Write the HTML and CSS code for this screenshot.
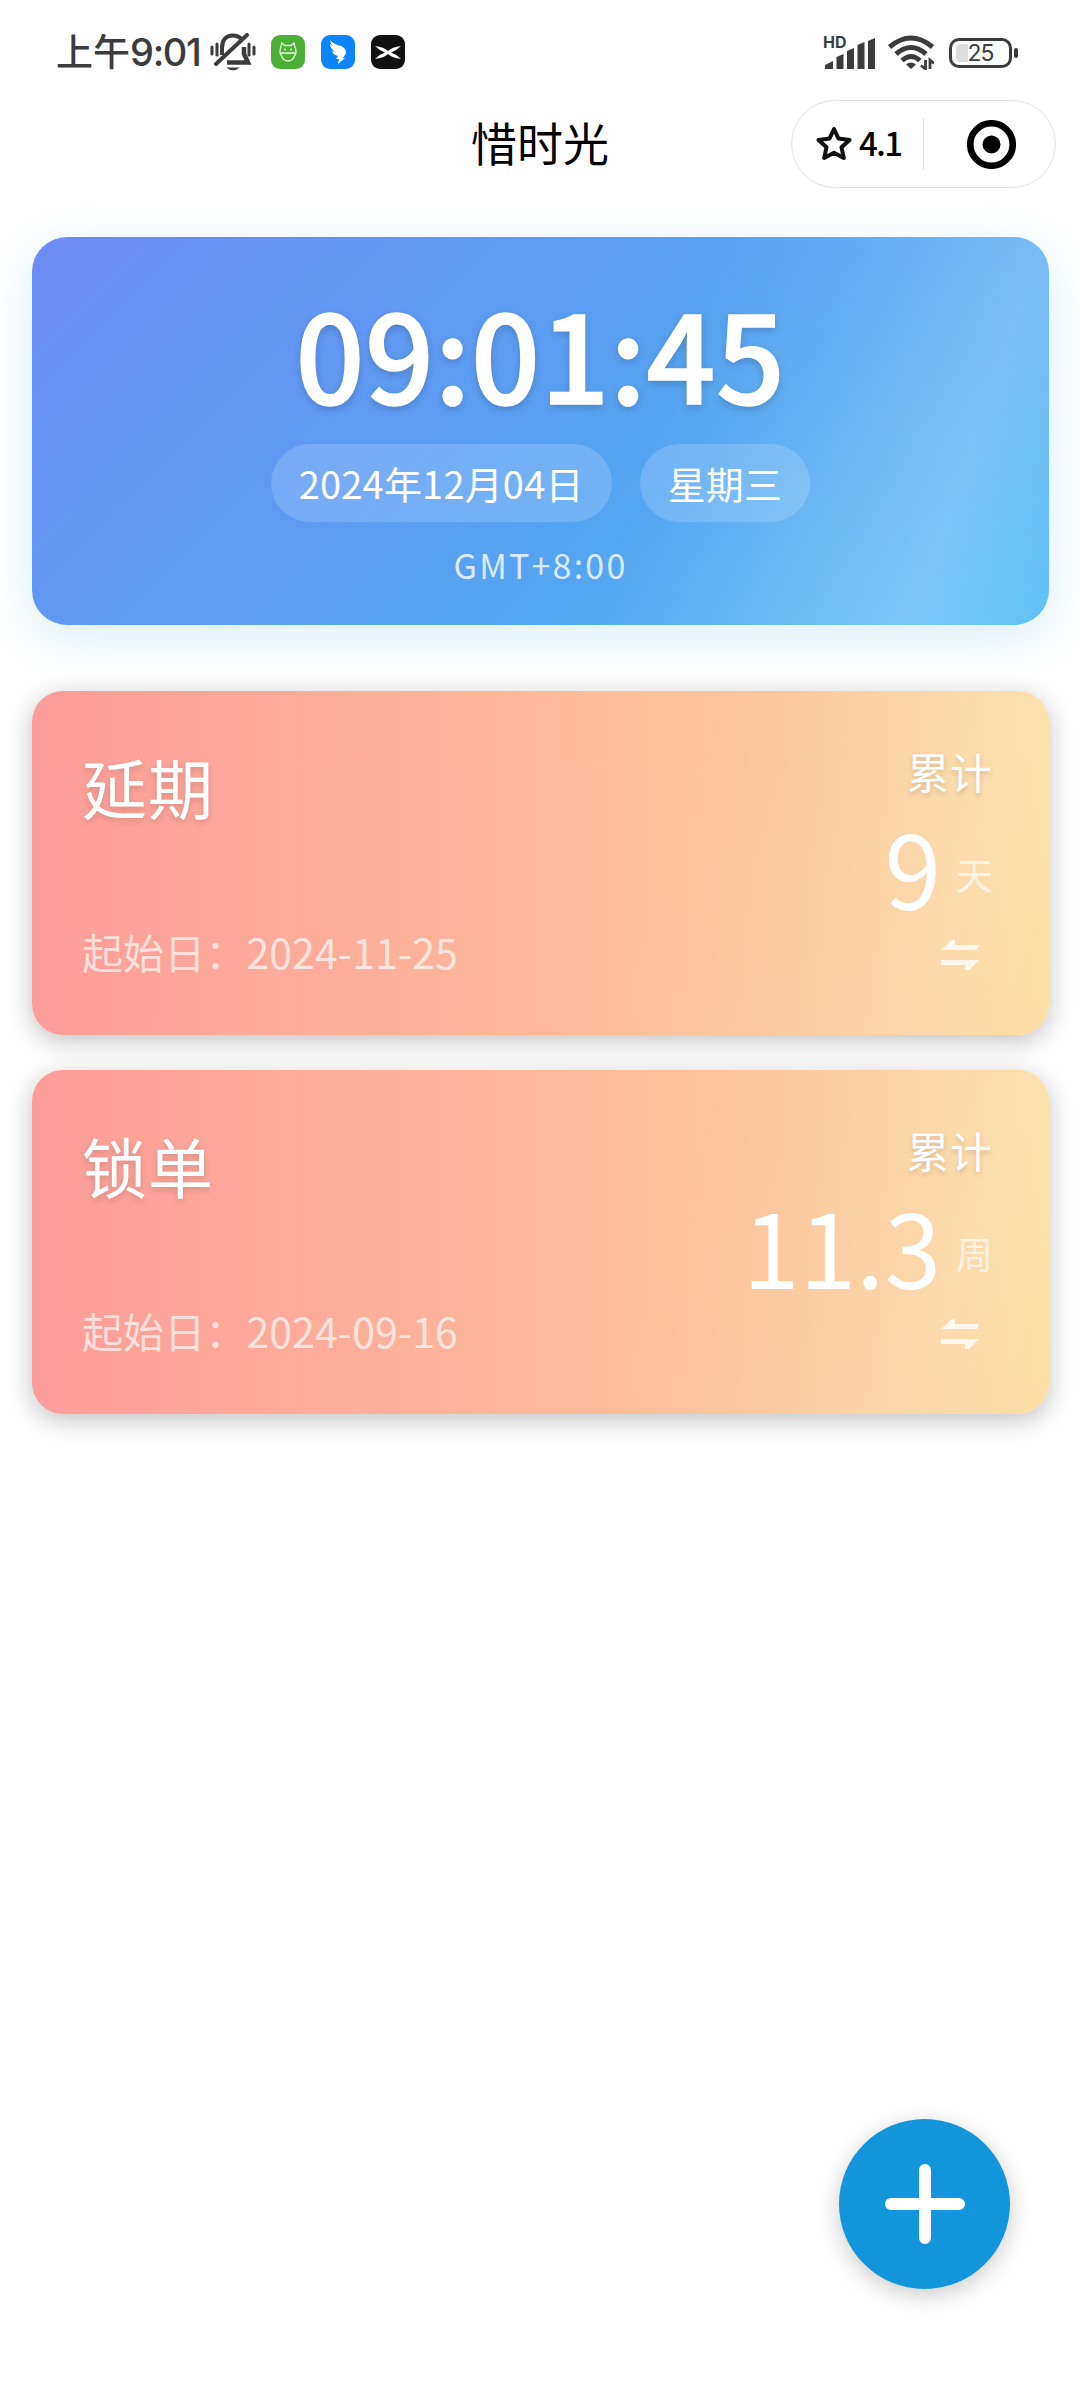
FILE: index.html
```html
<!DOCTYPE html>
<html lang="zh-CN">
<head>
    <meta charset="UTF-8">
    <meta name="viewport" content="width=device-width, initial-scale=1.0">
    <title>惜时光</title>
    <link rel="stylesheet" href="styles.css">
</head>
<body>
    <div class="status-bar">
        <div class="status-left">
            <span class="status-time">上午<b>9:01</b></span>
            <svg class="bell" viewBox="0 0 46 38" fill="none" stroke="#3c3c3e" stroke-width="4">
                <path d="M12 22V15C12 7 16 2.500 22.500 2.500C27 2.500 30 4 32 7"/>
                <path d="M34 14V21L38 29.500H17" stroke-width="4.500"/>
                <path d="M6 31L37 2" stroke-linecap="round"/>
                <path d="M2 14V21M7 11V22M39 11V22M44 14V21" stroke-width="3" stroke-linecap="round"/>
                <path d="M16 34.500H30Q23 40 16 34.500Z" fill="#3c3c3e" stroke="none"/>
            </svg>
            <svg class="app" viewBox="0 0 34 34">
                <rect width="34" height="34" rx="9" fill="#4cb036"/>
                <path d="M10 12L10.500 8L14 10.500H20L23 8L24 12Q26 17 24 20Q22 26 17 26Q12 26 10 20Q8 17 10 12ZM9.500 18H24.500" fill="none" stroke="#e3f6dc" stroke-width="1.300"/>
                <circle cx="14" cy="14.500" r="1" fill="#e3f6dc"/>
                <circle cx="20" cy="14.500" r="1" fill="#e3f6dc"/>
            </svg>
            <svg class="app" viewBox="0 0 34 34">
                <rect width="34" height="34" rx="9" fill="#0b85f8"/>
                <path d="M9 5Q12 9 20 11Q25 13 25 18L22 23H24L17 29L18 24H15L17 21Q12 20 11 16L14 17Q9 13 9 9L12 11Q9 8 9 5Z" fill="#fff"/>
            </svg>
            <svg class="app" viewBox="0 0 34 34">
                <rect width="34" height="34" rx="9" fill="#111"/>
                <path d="M4 11Q13 12 17 16Q21 12 30 11Q25 16 20 17.500Q25 19 30 24Q21 23 17 19Q13 23 4 24Q9 19 14 17.500Q9 16 4 11Z" fill="#fff"/>
            </svg>
        </div>
        <div class="status-right">
            <div class="signal">
                <span class="hd">HD</span>
                <svg viewBox="0 0 50 32" fill="#3c3c3e">
                    <path d="M0 32V28L8 24V32ZM11.500 32V20L18.500 17V32ZM22 32V14L29 11V32ZM32.500 32V8L39.500 5V32ZM43 32V4L50 1V32Z"/>
                </svg>
            </div>
            <svg class="wifi" viewBox="0 0 46 35" fill="none" stroke="#3c3c3e" stroke-width="5">
                <path d="M1.500 12Q23 -6 44.500 12"/>
                <path d="M8 19Q23 6 38 19"/>
                <path d="M14 25.500Q23 17.500 32 25.500"/>
                <path d="M18 29.500Q23 25.500 28 29.500L23 34Z" fill="#3c3c3e" stroke="none"/>
                <path d="M37.500 25V34L33 30.500M42 34V25L46 28.500" stroke-width="2.800"/>
            </svg>
            <div class="battery"><span class="battery-level"></span><span class="battery-text">25</span></div>
        </div>
    </div>

    <div class="nav-bar">
        <h1>惜时光</h1>
        <div class="capsule">
            <div class="rating">
                <svg viewBox="0 0 36 36" fill="none" stroke="#111" stroke-width="4" stroke-linejoin="round">
                    <path d="M18 3L22.400 12.400L33.500 14L25.500 21.300L27.800 32L18 26.800L8.200 32L10.500 21.300L2.500 14L13.600 12.400Z"/>
                </svg>
                <span>4.1</span>
            </div>
            <div class="close">
                <svg viewBox="0 0 48 48">
                    <circle cx="24" cy="24" r="20.800" fill="none" stroke="#000" stroke-width="6.500"/>
                    <circle cx="24" cy="24" r="8.800"/>
                </svg>
            </div>
        </div>
    </div>

    <div class="container">
        <div class="clock-card">
            <div class="clock-time">09:01:45</div>
            <div class="clock-date">
                <span>2024年12月04日</span>
                <span>星期三</span>
            </div>
            <div class="clock-zone">GMT+8:00</div>
        </div>

        <div class="day-card">
            <div class="day-info">
                <h2>延期</h2>
                <p>起始日：2024-11-25</p>
            </div>
            <div class="day-count">
                <div class="count-label">累计</div>
                <div class="count-value">9<span>天</span></div>
                <svg class="swap" viewBox="0 0 38 30"><path d="M0 10L11 0H14V5H38L36 10ZM38 20L28 30H24V25H0V20Z" fill="#fff"/></svg>
            </div>
        </div>

        <div class="day-card">
            <div class="day-info">
                <h2>锁单</h2>
                <p>起始日：2024-09-16</p>
            </div>
            <div class="day-count">
                <div class="count-label">累计</div>
                <div class="count-value">11.3<span>周</span></div>
                <svg class="swap" viewBox="0 0 38 30"><path d="M0 10L11 0H14V5H38L36 10ZM38 20L28 30H24V25H0V20Z" fill="#fff"/></svg>
            </div>
        </div>
    </div>

    <button class="add-btn">
        <svg viewBox="0 0 80 80" fill="none" stroke="#fff" stroke-width="12" stroke-linecap="round">
            <path d="M40 6V74M6 40H74"/>
            <path d="M36 40L40 36L44 40L40 44Z" stroke-width="8" stroke-linejoin="round"/>
        </svg>
    </button>
</body>
</html>
```
FILE: styles.css
```css
* {
    margin: 0;
    padding: 0;
    box-sizing: border-box;
    font-family: "Noto Sans CJK SC", sans-serif;
}

body {
    background: #fefefe;
    height: 2400px;
    overflow: hidden;
}

svg {
    display: block;
}

/* status bar */
.status-bar {
    height: 100px;
    padding: 0 62px 0 56px;
    display: flex;
    justify-content: space-between;
    align-items: center;
    color: #3c3c3e;
}

.status-left {
    display: flex;
    align-items: center;
    padding-top: 4px;
}

.status-time {
    width: 154px;
    margin-top: -2px;
    font-size: 37px;
    line-height: 50px;
    font-weight: 500;
    white-space: nowrap;
}

.status-time b {
    font-family: Inter, sans-serif;
    font-size: 38px;
    font-weight: 500;
    letter-spacing: -1.3px;
}

.bell {
    width: 46px;
    height: 38px;
    margin-right: 15px;
}

.app {
    width: 34px;
    height: 34px;
    margin-right: 16px;
}

.status-right {
    display: flex;
    align-items: center;
    padding-top: 5px;
}

.signal {
    position: relative;
    width: 50px;
    height: 32px;
    margin-right: 13px;
}

.signal svg {
    width: 50px;
    height: 32px;
}

.hd {
    position: absolute;
    left: -2px;
    top: -3px;
    font: 700 16px/16px Inter, sans-serif;
}

.wifi {
    width: 46px;
    height: 35px;
    margin-right: 15px;
}

.battery {
    position: relative;
    width: 63px;
    height: 30px;
    border: 3px solid #3c3c3e;
    border-radius: 10px;
    display: flex;
    align-items: center;
    justify-content: center;
    margin-right: 6px;
}

.battery::after {
    content: "";
    position: absolute;
    right: -9px;
    top: 7px;
    width: 4px;
    height: 10px;
    border-radius: 2px;
    background: #3c3c3e;
}

.battery-level {
    position: absolute;
    left: 4px;
    top: 3px;
    width: 12px;
    height: 18px;
    border-radius: 4px 0 0 4px;
    background: #ddd;
}

.battery-text {
    position: relative;
    font: 400 23px/24px Inter, sans-serif;
    letter-spacing: -1px;
}

/* nav bar */
.nav-bar {
    height: 88px;
    padding-right: 24px;
    display: grid;
    grid-template-columns: 288px 504px 264px;
    align-items: center;
}

.nav-bar h1 {
    grid-column: 2;
    text-align: center;
    font-size: 46px;
    font-weight: 400;
    line-height: 82px;
    height: 88px;
    color: #000;
}

.capsule {
    height: 88px;
    margin-left: -1px;
    border: 1px solid #e4e4e4;
    border-radius: 44px;
    display: flex;
    align-items: center;
}

.rating {
    width: 132px;
    height: 52px;
    padding-left: 24px;
    border-right: 1px solid #ddd;
    display: flex;
    align-items: center;
    gap: 7px;
}

.rating svg {
    width: 36px;
    height: 36px;
}

.rating span {
    font-size: 33px;
    font-weight: 500;
    line-height: 48px;
    height: 52px;
    letter-spacing: -1.7px;
    color: #000;
}

.close {
    flex: 1;
    padding-left: 4px;
    display: flex;
    justify-content: center;
}

.close svg {
    width: 49px;
    height: 49px;
}

/* cards */
.container {
    padding: 49px 31px 0 32px;
    display: flex;
    flex-direction: column;
    gap: 35px;
}

.clock-card {
    height: 388px;
    margin-bottom: 31px;
    padding-top: 57px;
    border-radius: 35px;
    background:
        linear-gradient(109deg, transparent 60%, rgba(255, 255, 255, 0.2) 88%, rgba(255, 255, 255, 0.02) 101%),
        linear-gradient(135deg, #6c8cf5 0%, #54a6f1 64%, #59b1f2 80%, #5cc0f6 100%);
    box-shadow: 0 12px 46px rgba(79, 190, 240, 0.2);
    display: flex;
    flex-direction: column;
    align-items: center;
    color: #fff;
}

/* stroke makes the digits semi-bold */
.clock-time {
    font-size: 121px;
    line-height: 116px;
    font-weight: 500;
    letter-spacing: 0.5px;
    -webkit-text-stroke: 1.6px #fff;
    text-shadow: 0 3px 9px rgba(0, 0, 0, 0.2);
}

.clock-date {
    display: flex;
    gap: 28px;
    margin-top: 34px;
}

.clock-date span {
    padding: 0 28px;
    border-radius: 39px;
    background: rgba(255, 255, 255, 0.16);
    font-size: 38px;
    line-height: 78px;
    letter-spacing: 0.2px;
}

.clock-zone {
    margin-top: 18px;
    font-size: 34px;
    line-height: 50px;
    letter-spacing: 2.2px;
    color: rgba(255, 255, 255, 0.8);
}

.day-card {
    height: 344px;
    padding: 47px 56px 0 50px;
    border-radius: 31px;
    background:
        linear-gradient(109deg, transparent 60%, rgba(255, 255, 255, 0.14) 88%, rgba(255, 255, 255, 0.02) 101%),
        linear-gradient(90deg, #fc9d99 0%, #fdb99a 50%, #fbc79a 75%, #fddda2 100%);
    box-shadow: 0 6px 24px rgba(0, 0, 0, 0.24);
    display: flex;
    justify-content: space-between;
    color: #fff;
}

.day-info h2 {
    font-size: 65px;
    font-weight: 400;
    line-height: 96px;
    letter-spacing: 1px;
    text-shadow: 0 3px 6px rgba(0, 0, 0, 0.14);
}

.day-info p {
    margin-top: 87px;
    font-size: 41px;
    line-height: 60px;
    letter-spacing: 0.1px;
    color: rgba(255, 255, 255, 0.68);
}

.day-count {
    display: flex;
    flex-direction: column;
    align-items: flex-end;
}

.count-label {
    font-size: 42px;
    line-height: 66px;
    letter-spacing: 1px;
    text-shadow: 0 3px 5px rgba(0, 0, 0, 0.14);
}

.count-value {
    height: 120px;
    font-size: 102px;
    line-height: 120px;
    margin-top: 2px;
}

.count-value span {
    margin-left: 15px;
    font-size: 37px;
    color: rgba(255, 255, 255, 0.7);
    vertical-align: 20px;
}

.swap {
    width: 38px;
    height: 30px;
    margin: 14px 14px 0 0;
    opacity: 0.8;
}

/* floating button */
.add-btn {
    position: fixed;
    left: 839px;
    top: 2119px;
    width: 171px;
    height: 170px;
    border: none;
    border-radius: 50%;
    background: #1295db;
    box-shadow: 0 6px 22px rgba(0, 0, 0, 0.2);
    display: flex;
    align-items: center;
    justify-content: center;
}

.add-btn svg {
    width: 80px;
    height: 80px;
}
```
